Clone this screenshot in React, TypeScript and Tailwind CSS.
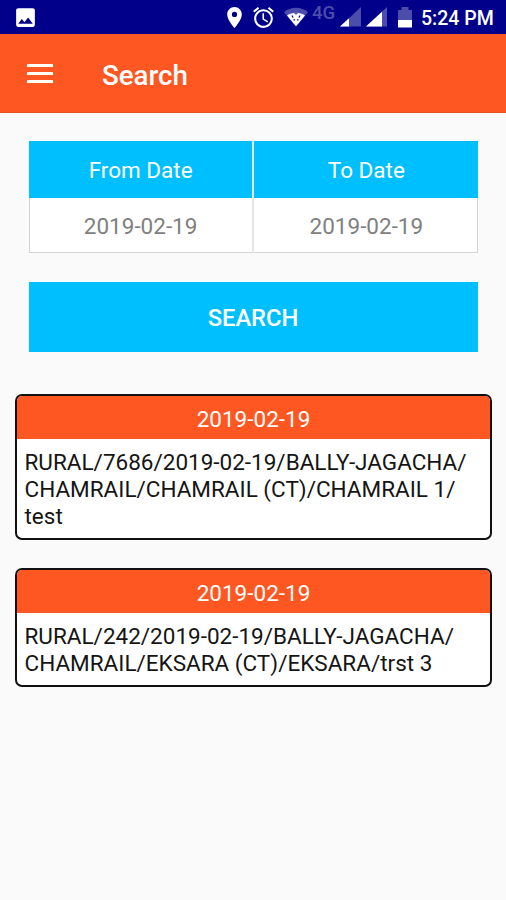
import { MdAlarm, MdImage, MdLocationOn } from "react-icons/md";

interface SearchResult {
    id: number;
    date: string;
    lines: string[];
}

const results: SearchResult[] = [
    {
        id: 1,
        date: "2019-02-19",
        lines: [
            "RURAL/7686/2019-02-19/BALLY-JAGACHA/",
            "CHAMRAIL/CHAMRAIL (CT)/CHAMRAIL 1/",
            "test",
        ],
    },
    {
        id: 2,
        date: "2019-02-19",
        lines: [
            "RURAL/242/2019-02-19/BALLY-JAGACHA/",
            "CHAMRAIL/EKSARA (CT)/EKSARA/trst 3",
        ],
    },
];

function WifiIcon() {
    return (
        <svg width="24" height="20" viewBox="0 0 24 20" className="ml-[8px]">
            <path d="M0 5.2C3.200 2.400 7.400.8 12 .8s8.800 1.600 12 4.400L12 19.500z" fill="#4c4cab" />
            <path d="M3 8.500C5.500 6.800 9 5.800 12 5.800s6.500 1 9 2.700L12 19.300z" fill="#fff" />
            {/* data arrows */}
            <path d="M8 8.500l1 2M16 8.500l-1 2M9.500 12.800h1.500M13 12.800h1.500" stroke="#00008b" strokeWidth="1.200" />
            <path d="M9.500 5.800h5L12 7.800z" fill="#4c4cab" />
        </svg>
    );
}

function SignalIcon({ level, className }: { level: number; className: string }) {
    return (
        <svg width="21" height="20" viewBox="0 0 21 20" className={className}>
            <path d="M0 19.500L21 0v19.500z" fill="#4c4cab" />
            <path d={`M0 19.500L${level} ${19.5 - (level * 19.5) / 21}V19.500z`} fill="#fff" />
        </svg>
    );
}

function BatteryIcon() {
    return (
        <svg width="14" height="21" viewBox="0 0 14 21" className="ml-[11px]">
            <path d="M0 3h3.500V0h7v3H14v11H0z" fill="#4c4cab" />
            <path d="M0 13h14V20.500H0z" fill="#fff" />
        </svg>
    );
}

function StatusBar() {
    return (
        <div className="flex h-[34px] items-center bg-[#00008b] pl-[13px] pr-[10px] text-white">
            <MdImage size={25} />
            <div className="ml-auto flex items-center">
                <MdLocationOn size={25} />
                <MdAlarm size={25} className="ml-[4px]" />
                <WifiIcon />
                <span className="mb-2 ml-1 w-[25px] text-[18.5px] leading-none font-medium text-[#4c4cab]">4G</span>
                <SignalIcon level={9} className="ml-[3px]" />
                <SignalIcon level={16} className="ml-[5px]" />
                <BatteryIcon />
                <span className="ml-[9px] w-[75px] pt-[3px] text-[19.5px] leading-none font-medium whitespace-nowrap">5:24 PM</span>
            </div>
        </div>
    );
}

function DateColumn({ label, value, className }: { label: string; value: string; className: string }) {
    return (
        <div className="flex flex-1 flex-col text-center">
            <div className="flex h-[56.5px] items-center justify-center bg-[#00bfff] pt-[2px] pl-px text-white">{label}</div>
            <div className={`flex h-[55.5px] items-center justify-center border-b-[1.5px] border-[#d4d4d4] bg-white pt-[3px] text-[#808080] ${className}`}>
                {value}
            </div>
        </div>
    );
}

function ResultCard({ result }: { result: SearchResult }) {
    return (
        <div className="overflow-hidden rounded-[7px] border-2 border-[#111] bg-white">
            <div className="flex h-[42.5px] items-center justify-center bg-[#ff5722] pt-[4px] pl-px text-white">{result.date}</div>
            <div className="px-2 pt-[10px] pb-[8.5px] leading-[27px] whitespace-nowrap text-[#151515]">
                {result.lines.map((line) => (
                    <p key={line}>{line}</p>
                ))}
            </div>
        </div>
    );
}

export default function App() {
    return (
        <div className="min-h-screen bg-[#fafafa] font-['Roboto',sans-serif] text-[22.5px] leading-none">
            <StatusBar />
            <header className="flex h-[79px] items-center border-b border-[#e85420] bg-[#ff5722] pl-[27px] text-white">
                <button className="flex w-[26px] flex-col gap-[5px]">
                    <span className="h-[3px] bg-white" />
                    <span className="h-[3px] bg-white" />
                    <span className="h-[3px] bg-white" />
                </button>
                <h1 className="ml-[49px] pt-[6px] text-[27.7px] font-medium">Search</h1>
            </header>
            <main className="px-[14.5px] pt-[28px]">
                <section className="px-[14px]">
                    <div className="flex gap-[2.5px] bg-[#e6e6e6]">
                        <DateColumn label="From Date" value="2019-02-19" className="border-l-[1.5px]" />
                        <DateColumn label="To Date" value="2019-02-19" className="border-r-[1.5px] pl-[2px]" />
                    </div>
                    <button className="mt-[29px] flex h-[70px] w-full items-center justify-center bg-[#00bfff] pt-[3px] text-[23.700px] font-medium text-white">
                        SEARCH
                    </button>
                </section>
                <div className="mt-[42px] flex flex-col gap-7">
                    {results.map((result) => (
                        <ResultCard key={result.id} result={result} />
                    ))}
                </div>
            </main>
        </div>
    );
}
